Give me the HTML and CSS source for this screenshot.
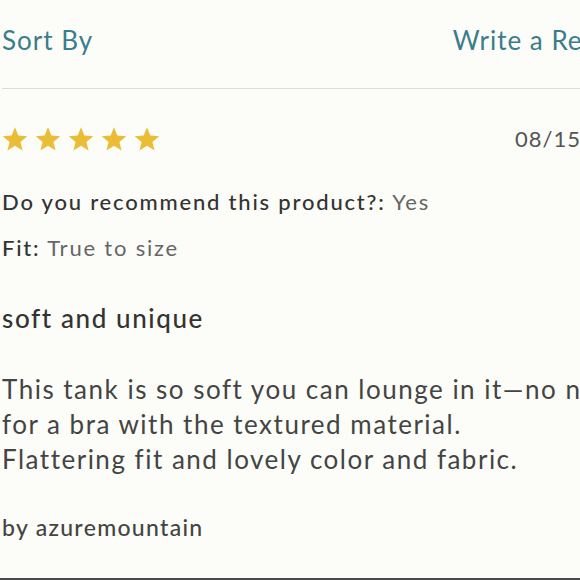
FILE: index.html
```html
<!DOCTYPE html>
<html lang="en">
<head>
<meta charset="utf-8">
<title>Reviews</title>
<link rel="stylesheet" href="styles.css">
</head>
<body>
<div class="page">
  <header class="toolbar">
    <span class="link">Sort By</span>
    <span class="link">Write a Review</span>
  </header>
  <article class="review">
    <div class="review-top">
      <div class="stars" aria-label="5 out of 5 stars">
        <svg class="star" viewBox="0 0 24 24"><path d="M12 1.2l3.1 7.6 8.2.6-6.3 5.3 2 8-7-4.4-7 4.4 2-8L.7 9.4l8.2-.6z"/></svg>
        <svg class="star" viewBox="0 0 24 24"><path d="M12 1.2l3.1 7.6 8.2.6-6.3 5.3 2 8-7-4.4-7 4.4 2-8L.7 9.4l8.2-.6z"/></svg>
        <svg class="star" viewBox="0 0 24 24"><path d="M12 1.2l3.1 7.6 8.2.6-6.3 5.3 2 8-7-4.4-7 4.4 2-8L.7 9.4l8.2-.6z"/></svg>
        <svg class="star" viewBox="0 0 24 24"><path d="M12 1.2l3.1 7.6 8.2.6-6.3 5.3 2 8-7-4.4-7 4.4 2-8L.7 9.4l8.2-.6z"/></svg>
        <svg class="star" viewBox="0 0 24 24"><path d="M12 1.2l3.1 7.6 8.2.6-6.3 5.3 2 8-7-4.4-7 4.4 2-8L.7 9.4l8.2-.6z"/></svg>
      </div>
      <span class="date">08/15/2019</span>
    </div>
    <p class="attr attr-first"><span class="label">Do you recommend this product?:</span> <span class="value">Yes</span></p>
    <p class="attr"><span class="label">Fit:</span> <span class="value">True to size</span></p>
    <h3 class="title">soft and unique</h3>
    <p class="body">This tank is so soft you can lounge in it—no need<br>for a bra with the textured material.<br>Flattering fit and lovely color and fabric.</p>
    <p class="author">by azuremountain</p>
  </article>
</div>
</body>
</html>
```

FILE: styles.css
```css
html, body {
  margin: 0;
  padding: 0;
  height: 100%;
  overflow: hidden;
  background: #fcfcf8;
}
body {
  font-family: Lato, "Open Sans", sans-serif;
  color: #3a3a3a;
  border-bottom: 2px solid #4a4a4a;
  box-sizing: border-box;
}
.page {
  width: 678px;
  padding-left: 2px;
}
.toolbar {
  display: flex;
  justify-content: space-between;
  align-items: flex-start;
  padding: 25px 40px 33px 0;
  height: 30px;
  border-bottom: 1px solid #dcdcd8;
}
.link {
  color: #3a7d8c;
  font-size: 26px;
  line-height: 30px;
  letter-spacing: 1px;
}
.review {
  padding-top: 37px;
}
.review-top {
  display: flex;
  justify-content: space-between;
  align-items: center;
  height: 25px;
  padding-right: 33px;
}
.stars {
  display: flex;
  gap: 7px;
}
.star {
  width: 26px;
  height: 26px;
  fill: #ebbd36;
}
.date {
  font-size: 22px;
  line-height: 25px;
  color: #555;
  letter-spacing: 1px;
}
.attr {
  margin: 20px 0 0;
  font-size: 22px;
  line-height: 26px;
  letter-spacing: 1.8px;
}
.attr-first {
  margin-top: 38px;
}
.label {
  font-weight: 500;
  color: #333;
}
.value {
  color: #666;
}
.title {
  margin: 42px 0 0;
  font-size: 26px;
  line-height: 30px;
  font-weight: 500;
  letter-spacing: 1.6px;
  color: #333;
}
.body {
  margin: 39px 0 0;
  font-size: 26px;
  line-height: 35px;
  letter-spacing: 1.5px;
  color: #444;
}
.author {
  margin: 37px 0 0;
  font-size: 23px;
  line-height: 27px;
  font-weight: 500;
  letter-spacing: 1.3px;
  color: #444;
}
```
